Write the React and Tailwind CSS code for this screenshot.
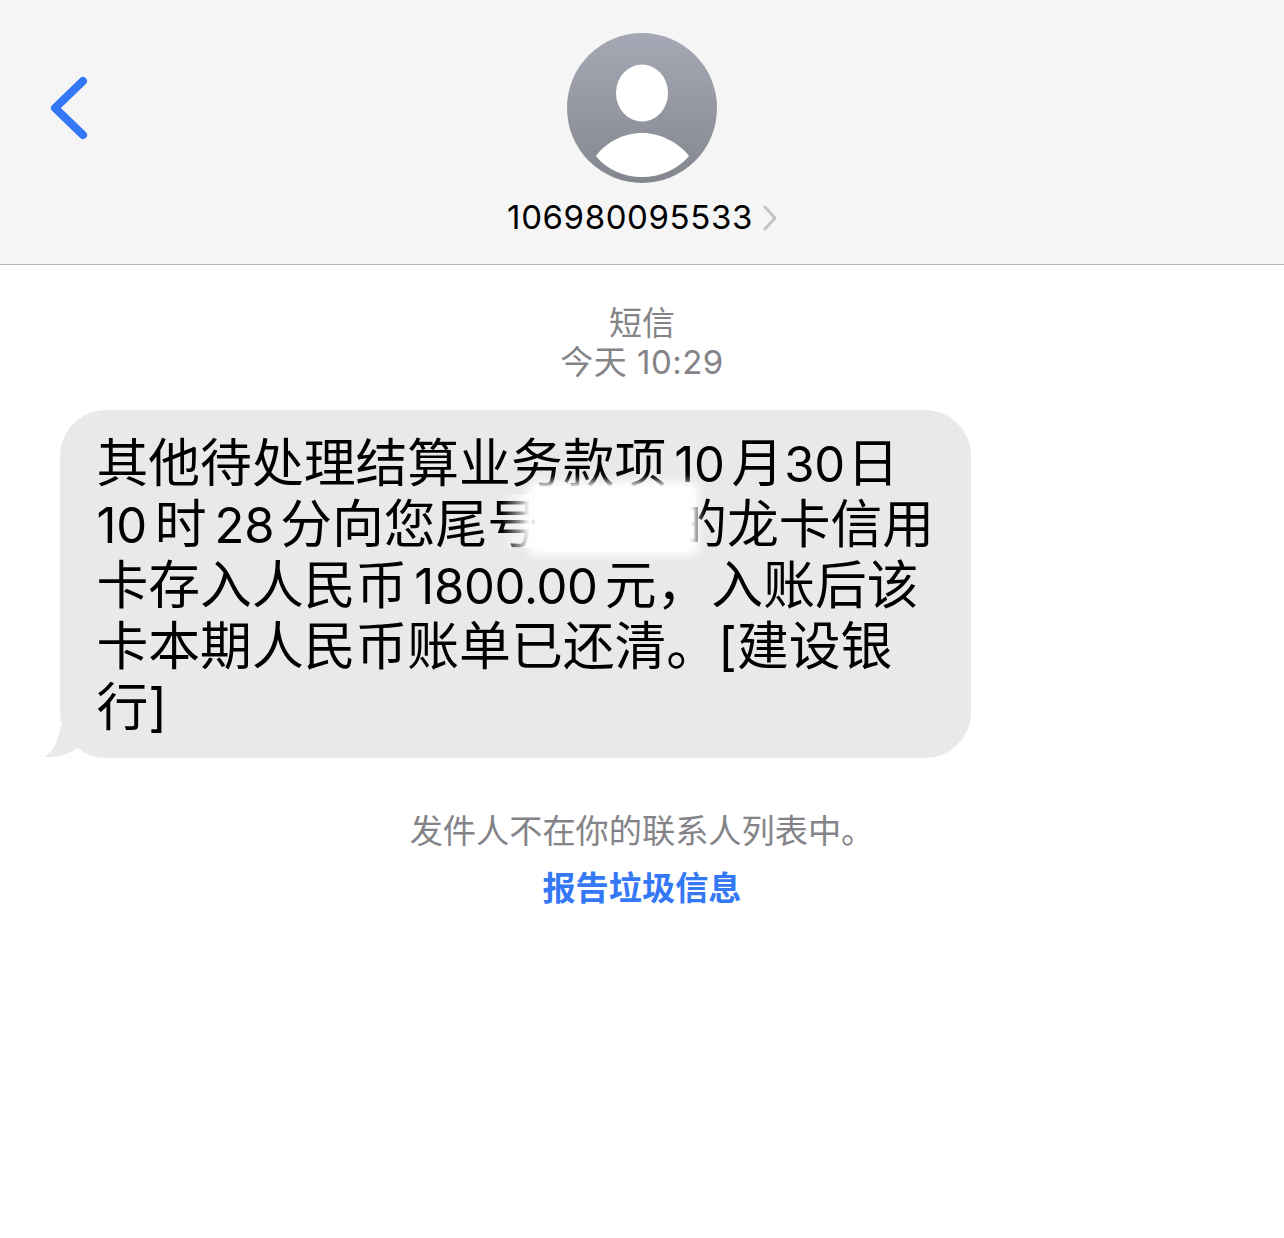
const FONT = "font-['Inter','Noto_Sans_CJK_SC',sans-serif]"

function BackChevron() {
  return (
    <svg width="38" height="64" viewBox="0 0 38 64" fill="none" stroke="#3478f6" strokeWidth="8" strokeLinecap="round" strokeLinejoin="round">
      <path d="M33 5 L5 32 L33 59" />
    </svg>
  )
}

function Avatar() {
  return (
    <svg width="150" height="150" viewBox="0 0 150 150">
      <defs>
        <linearGradient id="avatarBg" x1="0" y1="0" x2="0" y2="1">
          <stop offset="0" stopColor="#a6a9b5" />
          <stop offset="1" stopColor="#84868f" />
        </linearGradient>
      </defs>
      <circle cx="75" cy="75" r="75" fill="url(#avatarBg)" />
      <ellipse cx="75" cy="60" rx="26" ry="28.5" fill="#fff" />
      <path d="M29 123 C38 110 56 100 75 100 C94 100 112 110 122 123 C110 137 93 144 75 144 C57 144 40 137 29 123 Z" fill="#fff" />
    </svg>
  )
}

function Line({ children }) {
  return <div className="h-[61px] leading-[61px] whitespace-nowrap">{children}</div>
}

// latin runs sit slightly smaller than the CJK text, spacing is set per use
function Num({ className, children }) {
  return <span className={`text-[49px] tracking-[-0.3px] ${className}`}>{children}</span>
}

export default function App() {
  return (
    <div className={`min-h-[1238px] bg-white ${FONT}`}>

      {/* Header */}
      <div className="h-[265px] bg-[#f5f5f5] border-b border-[#b4b4b4] grid grid-cols-[1fr_auto_1fr]">
        <div className="pl-[50px] pt-[76px]">
          <BackChevron />
        </div>
        <div className="flex flex-col items-center pt-[33px]">
          <Avatar />
          <div className="flex items-center mt-[13px] h-[42px]">
            <span className="text-[33px] text-black leading-none tracking-[0.6px]">106980095533</span>
            <svg className="ml-[10px] mt-[2px]" width="14" height="26" viewBox="0 0 14 26" fill="none" stroke="#c4c4c6" strokeWidth="3" strokeLinecap="round" strokeLinejoin="round">
              <path d="M2 2 L12 13 L2 24" />
            </svg>
          </div>
        </div>
        <div />
      </div>

      {/* Timestamp */}
      <div className="pt-[39px] flex flex-col items-center text-[#848488] text-[33px] leading-[39px]">
        <div>短信</div>
        <div className="tracking-[0.5px]">今天 10:29</div>
      </div>

      {/* Bubble */}
      <div className="pt-[28px] pl-[60px]">
        <div className="relative w-[911px] h-[348px] rounded-[46px] bg-[#e9e9eb] pl-[36.5px] pt-[23px] text-[51.8px] text-black">
          <svg className="absolute left-[-16px] bottom-0" width="60" height="32" viewBox="0 0 60 32" fill="#e9e9eb">
            <path d="M16 0 C16 12 10 25 0 31 C14 32 27 28 36 20 L60 20 L60 0 Z" />
          </svg>
          <Line>其他待处理结算业务款项<Num className="ml-[8px] mr-[7px]">10</Num>月<Num className="ml-[1px] mr-[2px]">30</Num>日</Line>
          <Line><Num className="mr-[8px]">10</Num>时<Num className="ml-[8px] mr-[6px]">28</Num>分向您尾号<span className="inline-block w-[136px]" />的龙卡信用</Line>
          <Line>卡存入人民币<Num className="mx-[7px]">1800.00</Num>元，<span className="ml-[3px]">入账后该</span></Line>
          <Line>卡本期人民币账单已还清。[建设银</Line>
          <Line>行]</Line>
          {/* redacted card number */}
          <div className="absolute left-[468px] top-[72px] w-[170px] h-[74px] rounded-[8px] bg-white blur-[4px]" />
          <div className="absolute left-[442px] top-[84px] w-[30px] h-[54px] bg-linear-to-r from-white/0 to-white" />
        </div>
      </div>

      {/* Unknown sender note */}
      <div className="pt-[53px] flex flex-col items-center text-[33.2px] leading-[40px]">
        <div className="text-[#848488]">发件人不在你的联系人列表中。</div>
        <div className="mt-[17px] text-[#3478f6] font-semibold">报告垃圾信息</div>
      </div>
    </div>
  )
}
